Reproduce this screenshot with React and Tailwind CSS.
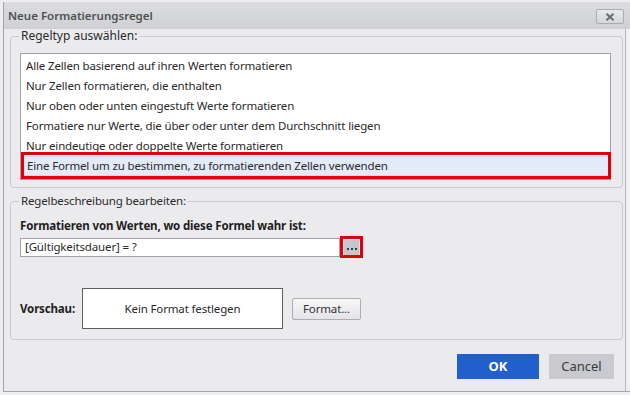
export default function App() {
  const rows = [
    "Alle Zellen basierend auf ihren Werten formatieren",
    "Nur Zellen formatieren, die enthalten",
    "Nur oben oder unten eingestuft Werte formatieren",
    "Formatiere nur Werte, die über oder unter dem Durchschnitt liegen",
    "Nur eindeutige oder doppelte Werte formatieren",
  ];
  return (
    <div className="w-[630px] h-[395px] overflow-hidden bg-[#eeeef0] pt-[2px] pl-[3px] font-['Noto_Sans',sans-serif] text-[11.5px] tracking-[-0.15px] text-[#2a2a2a]">
      <div className="h-[390px] flex flex-col border-l border-b border-[#a4a5aa]">
        {/* Title bar */}
        <div className="h-[27px] shrink-0 flex items-center justify-between pl-[4px] pr-[6px] bg-gradient-to-b from-[#dcdde1] to-[#cfd0d4]">
          <span className="text-[11.5px] tracking-normal font-semibold text-[#505050] leading-none">Neue Formatierungsregel</span>
          <div className="w-[28px] h-[15px] mt-[2px] flex items-center justify-center rounded-[2px] border border-[#a9abb0] bg-gradient-to-b from-[#e8e9ec] to-[#d6d7db]">
            <svg width="10" height="8" viewBox="0 0 10 8">
              <path d="M1.5 0.8 L8.5 7.2 M8.5 0.8 L1.5 7.2" stroke="#6b6b6b" strokeWidth="2" />
            </svg>
          </div>
        </div>
        {/* Body */}
        <div className="flex-1 flex">
          <div className="w-[622px] flex flex-col bg-[#ebebee] border-r border-[#b8b9bd]">
            {/* Group 1 */}
            <fieldset className="ml-[6px] w-[613px] border border-[#c9cacf] rounded-[4px] pb-[7px]">
              <legend className="ml-[8px] px-[2px] leading-[14px] text-[12px] tracking-normal text-[#2a2a2a]">Regeltyp auswählen:</legend>
              <div className="ml-[9px] mt-[10px] w-[591px] h-[127px] border border-[#a3a4a8] bg-white pt-[2px] flex flex-col">
                {rows.map((r) => (
                  <div key={r} className="h-[20px] shrink-0 flex items-center pl-[5px] leading-none">{r}</div>
                ))}
                <div className="relative h-[20px] shrink-0 flex items-center pl-[5px] leading-none bg-[#e3eaf8] border border-[#c9d7f0]">
                  Eine Formel um zu bestimmen, zu formatierenden Zellen verwenden
                  <div className="absolute -left-[1px] -right-[2px] -top-[5px] -bottom-[4px] border-[3px] border-[#e0000b] pointer-events-none" />
                </div>
              </div>
            </fieldset>
            {/* Group 2 */}
            <fieldset className="ml-[6px] mt-[6px] w-[613px] border border-[#c9cacf] rounded-[4px] pb-[10px] pl-[9px]">
              <legend className="ml-[-1px] px-[2px] leading-[14px] text-[#2a2a2a]">Regelbeschreibung bearbeiten:</legend>
              <div className="mt-[10px] font-bold leading-[16px] text-[#1e1e1e]">Formatieren von Werten, wo diese Formel wahr ist:</div>
              <div className="mt-[2px] flex items-center">
                <div className="w-[320px] h-[19px] border border-[#a3a4a8] bg-white flex items-center pl-[4px] leading-none text-[#2a2a2a]">
                  [Gültigkeitsdauer] = ?
                </div>
                <div className="w-[23px] h-[22px] border-[3px] border-[#e0000b] flex items-center justify-center">
                  <div className="w-[15px] h-[15px] bg-[#c6c7cc] flex items-center justify-center gap-[2px] pt-[3px]">
                    <span className="w-[2px] h-[2px] bg-[#3a3a3a]" />
                    <span className="w-[2px] h-[2px] bg-[#3a3a3a]" />
                    <span className="w-[2px] h-[2px] bg-[#3a3a3a]" />
                  </div>
                </div>
              </div>
              <div className="mt-[30px] flex items-center">
                <span className="w-[62px] font-bold text-[#1e1e1e]">Vorschau:</span>
                <div className="w-[201px] h-[41px] border border-[#5e5e5e] bg-white flex items-center justify-center text-[#2a2a2a]">
                  Kein Format festlegen
                </div>
                <div className="ml-[9px] w-[69px] h-[22px] rounded-[2px] border border-[#adaeb2] bg-gradient-to-b from-[#f7f7f8] to-[#e5e5e8] flex items-center justify-center text-[#333]">
                  Format...
                </div>
              </div>
            </fieldset>
            {/* Buttons */}
            <div className="mt-[14px] mr-[11px] flex justify-end gap-[10px]">
              <div className="w-[82px] h-[25px] bg-[#2160cc] flex items-center justify-center text-white font-bold text-[13px] tracking-normal">OK</div>
              <div className="w-[65px] h-[25px] bg-[#c8cacf] flex items-center justify-center text-[#3a3a3a] text-[13px] tracking-normal">Cancel</div>
            </div>
          </div>
          <div className="flex-1 bg-[#f0f0f2]" />
        </div>
      </div>
    </div>
  );
}
